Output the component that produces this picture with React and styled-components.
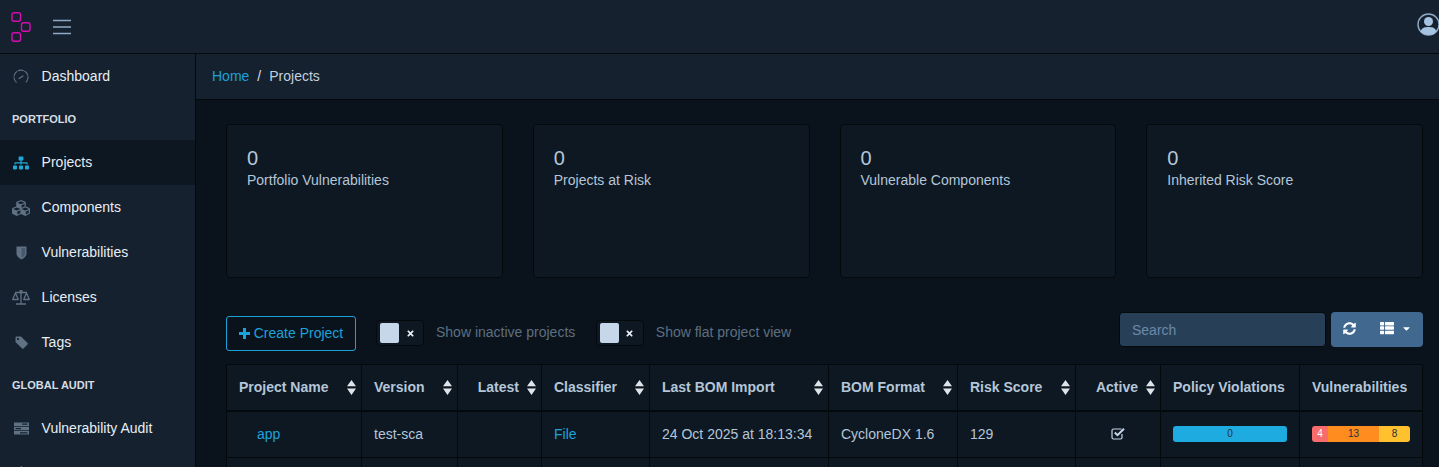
import React from 'react';
import styled, { createGlobalStyle } from 'styled-components';
import { FaFire, FaThList, FaCaretDown, FaSyncAlt, FaTimes, FaCubes, FaSitemap } from 'react-icons/fa';

const Global = createGlobalStyle`
  html, body { margin: 0; padding: 0; height: 100%; overflow: hidden; background: #0a131c; }
  #root { height: 100%; }
  * { box-sizing: border-box; }
  body { font-family: "Liberation Sans", Arial, sans-serif; font-size: 14px; line-height: 21px; color: #b4c6d8; }
`;

const Page = styled.div`display: flex; flex-direction: column; height: 467px; overflow: hidden;`;
const Header = styled.header`
  flex: 0 0 54px; display: flex; align-items: center; background: #15212f; border-bottom: 1px solid #04090e;
`;
const Logo = styled.svg`width: 22px; height: 32px; margin: 0 0 0 10px; flex: none;`;
const Burger = styled.svg`width: 20px; height: 16px; margin-left: 20px; flex: none;`;
const Avatar = styled.svg`margin-left: auto; margin-top: -3px; width: 22px; height: 24px; flex: none;`;
const Body = styled.div`flex: 1; display: flex; min-height: 0;`;
const Sidebar = styled.nav`flex: 0 0 196px; background: #15212f; border-right: 1px solid #04090e;`;
const NavItem = styled.div`
  height: 45px; display: flex; align-items: center; padding-left: 12px; color: #e8eef4;
  background: ${p => (p.$active ? '#0d1722' : 'transparent')};
`;
const NavIcon = styled.span`
  width: 18px; height: 16px; display: flex; align-items: center; justify-content: center; margin-right: 11.6px; flex: none;
  color: ${p => (p.$active ? '#20a8d8' : '#5f7183')}; font-size: ${p => p.$size || 15}px;
`;
const NavTitle = styled.div`
  height: ${p => p.$h}px; display: flex; align-items: center; padding-left: 12px; font-size: 11px; font-weight: 700; color: #d5dde5;
`;
const Main = styled.main`flex: 1; min-width: 0; display: flex; flex-direction: column;`;
const Crumbs = styled.div`
  flex: 0 0 46px; display: flex; align-items: center; padding-left: 16px; background: #15212f; border-bottom: 1px solid #04090e; color: #c1d0de;
`;
const Link = styled.a`color: #1ba2d9; text-decoration: none;`;
const Sep = styled.span`margin: 0 8px; color: #d5dde5;`;
const Content = styled.div`padding: 24px 16px 0 30px;`;
const Cards = styled.div`display: grid; grid-template-columns: repeat(4, 1fr); gap: 30px;`;
const Card = styled.div`height: 154px; padding: 21px 20px; background: #0d1823; border: 1px solid #04090e; border-radius: 4px;`;
const Num = styled.div`font-size: 20px; line-height: 24px; color: #b4c6d8;`;
const CardLabel = styled.div`line-height: 20px; color: #b4c6d8;`;
const Toolbar = styled.div`display: flex; align-items: flex-start; margin-top: 34px; height: 52px;`;
const CreateBtn = styled.button`
  margin-top: 4px; height: 35px; width: 130px; padding: 0; background: transparent; border: 1px solid #1ba2d9; border-radius: 3px; color: #1ba2d9;
  font: inherit; display: flex; align-items: center; justify-content: center; gap: 4px;
`;
const PlusIcon = styled.svg`width: 11px; height: 11px; flex: none;`;
const Switch = styled.div`
  margin: 8px 12px 0 ${p => p.$ml}px; width: 48px; height: 26px; background: #0d1823; border: 1px solid #04090e; border-radius: 4px; padding: 2px 3px; display: flex; align-items: center;
`;
const Knob = styled.div`width: 19px; height: 20px; background: #c5d7e9; border-radius: 2px; flex: none;`;
const SwitchX = styled.span`flex: 1; display: flex; justify-content: center; color: #e8eef4; font-size: 9px; margin-left: 1px;`;
const SwitchLabel = styled.span`margin-top: 8px; color: #5d6f80; line-height: 24px;`;
const Right = styled.div`margin-left: auto; display: flex; gap: 5px;`;
const Search = styled.input`
  width: 207px; height: 35px; padding: 0 12px; background: #283f58; border: 1px solid #04090e; border-radius: 4px; color: #fff; font: inherit;
  &::placeholder { color: #6b8aa8; opacity: 1; }
`;
const BtnGroup = styled.div`
  width: 92px; height: 35px; background: #41688f; border-radius: 4px; display: flex; align-items: center; color: #fff; padding-bottom: 3px;
`;
const BtnIcon = styled.span`display: flex; align-items: center; font-size: ${p => p.$size}px; margin-left: ${p => p.$ml}px;`;
const Table = styled.table`
  width: 1196px; table-layout: fixed; border-collapse: collapse; background: #0d1823;
  th, td { border: 1px solid #04090e; padding: 0 12px; }
`;
const Th = styled.th`
  height: 46px; border-bottom-width: 2px !important; font-weight: 700; color: #b4c6d8; position: relative; white-space: nowrap;
  text-align: ${p => p.$align || 'left'}; padding-right: ${p => (p.$sort ? 22 : 12)}px !important;
`;
const Sort = styled.svg`position: absolute; right: 5px; top: 15px; width: 9px; height: 15px; color: #dfe4e8;`;
const Td = styled.td`height: 47px; white-space: nowrap; text-align: ${p => p.$align || 'left'};`;
const Indent = styled.span`padding-left: ${p => p.$pl}px;`;
const Check = styled.svg`display: inline-block; vertical-align: -1px; width: 14px; height: 13px; color: #c5d7e9;`;
const Bar = styled.div`display: flex; height: 16px; border-radius: 3px; overflow: hidden; font-size: 10px; line-height: 16px; text-align: center;`;
const Seg = styled.div`flex: ${p => p.$w}; background: ${p => p.$c}; color: ${p => p.$fg || '#23303c'};`;

const cols = [135, 96, 84, 108, 179, 129, 118, 85, 139, 123];
const stats = ['Portfolio Vulnerabilities', 'Projects at Risk', 'Vulnerable Components', 'Inherited Risk Score'];
const heads = [
  ['Project Name', 'left', true], ['Version', 'left', true], ['Latest', 'right', true], ['Classifier', 'left', true], ['Last BOM Import', 'left', true],
  ['BOM Format', 'left', true], ['Risk Score', 'left', true], ['Active', 'right', true], ['Policy Violations', 'left'], ['Vulnerabilities', 'left'],
];

const Gauge = () => (
  <svg width="16" height="16" viewBox="0 0 16 16" fill="none" stroke="currentColor" strokeWidth="1.1">
    <path d="M3.6 13.6A7 7 0 1 1 12.4 13.6" strokeDasharray="6 .7" />
    <path d="M5.6 9.8 10.4 6.7" strokeWidth="1.3" />
  </svg>
);
const Shield = () => (
  <svg width="11" height="14" viewBox="0 0 11 14" fill="currentColor">
    <path d="M.5.5h10v7c0 2.800-2.500 4.600-5 6C3 12.100.5 10.300.5 7.500z" />
    <path d="M5.500 2h3.600v5.400c0 1.900-1.700 3.300-3.600 4.300z" fill="#46586a" />
  </svg>
);
const Scale = () => (
  <svg width="18" height="15" viewBox="0 0 18 15" fill="none" stroke="currentColor" strokeWidth="1.3">
    <path d="M9 1.500V13.500M4 14H14M3 2.500H15" />
    <path d="M.7 9.500 3.500 3 6.300 9.500zM11.700 9.500 14.500 3 17.300 9.500z" strokeLinejoin="round" />
    <circle cx="9" cy="1.800" r="1.200" />
  </svg>
);
const Tag = () => (
  <svg width="13" height="13" viewBox="0 0 13 13" fill="currentColor">
    <path fillRule="evenodd" d="M.5 1.500A1 1 0 0 1 1.500.5H6l6.500 6.500a1 1 0 0 1 0 1.400l-4 4a1 1 0 0 1-1.400 0L.5 6zM3 2a1 1 0 1 0 .01 0z" />
  </svg>
);
const Rows = () => (
  <svg width="15" height="13" viewBox="0 0 15 13" fill="currentColor">
    <path fillRule="evenodd" d="M0 .5h15v3.500H0zM8 1.500v1.200h5.500V1.500zM0 4.800h15v3.500H0zM1.500 6v1.200H7V6zM0 9h15v3.500H0zM6 10.200v1.200h7.500v-1.200z" />
  </svg>
);

export default function App() {
  return (
    <Page>
      <Global />
      <Header>
        <Logo viewBox="0 0 22 32" fill="none" stroke="#d60cb0" strokeWidth="1.4">
          <rect x="2" y="1.700" width="8.500" height="8.500" rx="2" />
          <rect x="11.500" y="11.700" width="8.500" height="8.500" rx="2" />
          <rect x="2" y="21.700" width="8.500" height="8.500" rx="2" />
        </Logo>
        <Burger viewBox="0 0 20 16" stroke="#8fa9c4" strokeWidth="1.500">
          <path d="M1 1.500H19M1 8H19M1 14.500H19" />
        </Burger>
        <Avatar viewBox="0 0 22 24" fill="#a6c3e0">
          <circle cx="11.500" cy="11.500" r="10.500" fill="none" stroke="#8fa9c4" strokeWidth="1.400" />
          <circle cx="11.500" cy="8.500" r="4.500" />
          <path d="M3.500 18.500C5 14.500 8 14 11.500 14S18 14.500 19.500 18.500C17.500 21 14.500 22 11.500 22S5.500 21 3.500 18.500z" />
        </Avatar>
      </Header>
      <Body>
        <Sidebar>
          <NavItem><NavIcon><Gauge /></NavIcon>Dashboard</NavItem>
          <NavTitle $h={41}>PORTFOLIO</NavTitle>
          <NavItem $active><NavIcon $active $size={16}><FaSitemap /></NavIcon>Projects</NavItem>
          <NavItem><NavIcon $size={18}><FaCubes /></NavIcon>Components</NavItem>
          <NavItem><NavIcon><Shield /></NavIcon>Vulnerabilities</NavItem>
          <NavItem><NavIcon><Scale /></NavIcon>Licenses</NavItem>
          <NavItem><NavIcon><Tag /></NavIcon>Tags</NavItem>
          <NavTitle $h={41}>GLOBAL AUDIT</NavTitle>
          <NavItem><NavIcon><Rows /></NavIcon>Vulnerability Audit</NavItem>
          <NavItem><NavIcon><FaFire /></NavIcon></NavItem>
        </Sidebar>
        <Main>
          <Crumbs><Link>Home</Link><Sep>/</Sep>Projects</Crumbs>
          <Content>
            <Cards>
              {stats.map(s => (
                <Card key={s}><Num>0</Num><CardLabel>{s}</CardLabel></Card>
              ))}
            </Cards>
            <Toolbar>
              <CreateBtn>
                <PlusIcon viewBox="0 0 11 11" fill="currentColor"><path d="M4 0h3v4h4v3H7v4H4V7H0V4h4z" /></PlusIcon>
                Create Project
              </CreateBtn>
              <Switch $ml={20}><Knob /><SwitchX><FaTimes /></SwitchX></Switch>
              <SwitchLabel>Show inactive projects</SwitchLabel>
              <Switch $ml={20.5}><Knob /><SwitchX><FaTimes /></SwitchX></Switch>
              <SwitchLabel>Show flat project view</SwitchLabel>
              <Right>
                <Search placeholder="Search" />
                <BtnGroup>
                  <BtnIcon $ml={12} $size={13}><FaSyncAlt /></BtnIcon>
                  <BtnIcon $ml={24} $size={14}><FaThList /></BtnIcon>
                  <BtnIcon $ml={7} $size={11}><FaCaretDown /></BtnIcon>
                </BtnGroup>
              </Right>
            </Toolbar>
            <Table>
              <colgroup>{cols.map((w, i) => <col key={i} width={w} />)}</colgroup>
              <thead>
                <tr>
                  {heads.map(([t, al, s]) => (
                    <Th key={t} $align={al} $sort={s}>
                      {t}
                      {s && (
                        <Sort viewBox="0 0 9 15" fill="currentColor">
                          <path d="M4.500 0 9 6.300H0zM0 8.500H9L4.500 15z" />
                        </Sort>
                      )}
                    </Th>
                  ))}
                </tr>
              </thead>
              <tbody>
                <tr>
                  <Td><Indent $pl={18}><Link>app</Link></Indent></Td>
                  <Td>test-sca</Td>
                  <Td />
                  <Td><Link>File</Link></Td>
                  <Td>24 Oct 2025 at 18:13:34</Td>
                  <Td>CycloneDX 1.6</Td>
                  <Td>129</Td>
                  <Td $align="center">
                    <Check viewBox="0 0 14 13" fill="none" stroke="currentColor">
                      <path d="M10.500 2H2.500A1.500 1.500 0 0 0 1 3.500v7A1.500 1.500 0 0 0 2.500 12h7a1.500 1.500 0 0 0 1.500-1.500V7" strokeWidth="1.200" />
                      <path d="M3.800 5.500 6.500 8.200 13 1.700" strokeWidth="2" />
                    </Check>
                  </Td>
                  <Td><Bar><Seg $w={1} $c="#1eabdf">0</Seg></Bar></Td>
                  <Td>
                    <Bar>
                      <Seg $w={16} $c="#f86c6b" $fg="#fff">4</Seg>
                      <Seg $w={51} $c="#ff8c1f">13</Seg>
                      <Seg $w={31} $c="#ffc12e">8</Seg>
                    </Bar>
                  </Td>
                </tr>
                <tr>{cols.map((_, i) => <Td key={i} />)}</tr>
              </tbody>
            </Table>
          </Content>
        </Main>
      </Body>
    </Page>
  );
}
